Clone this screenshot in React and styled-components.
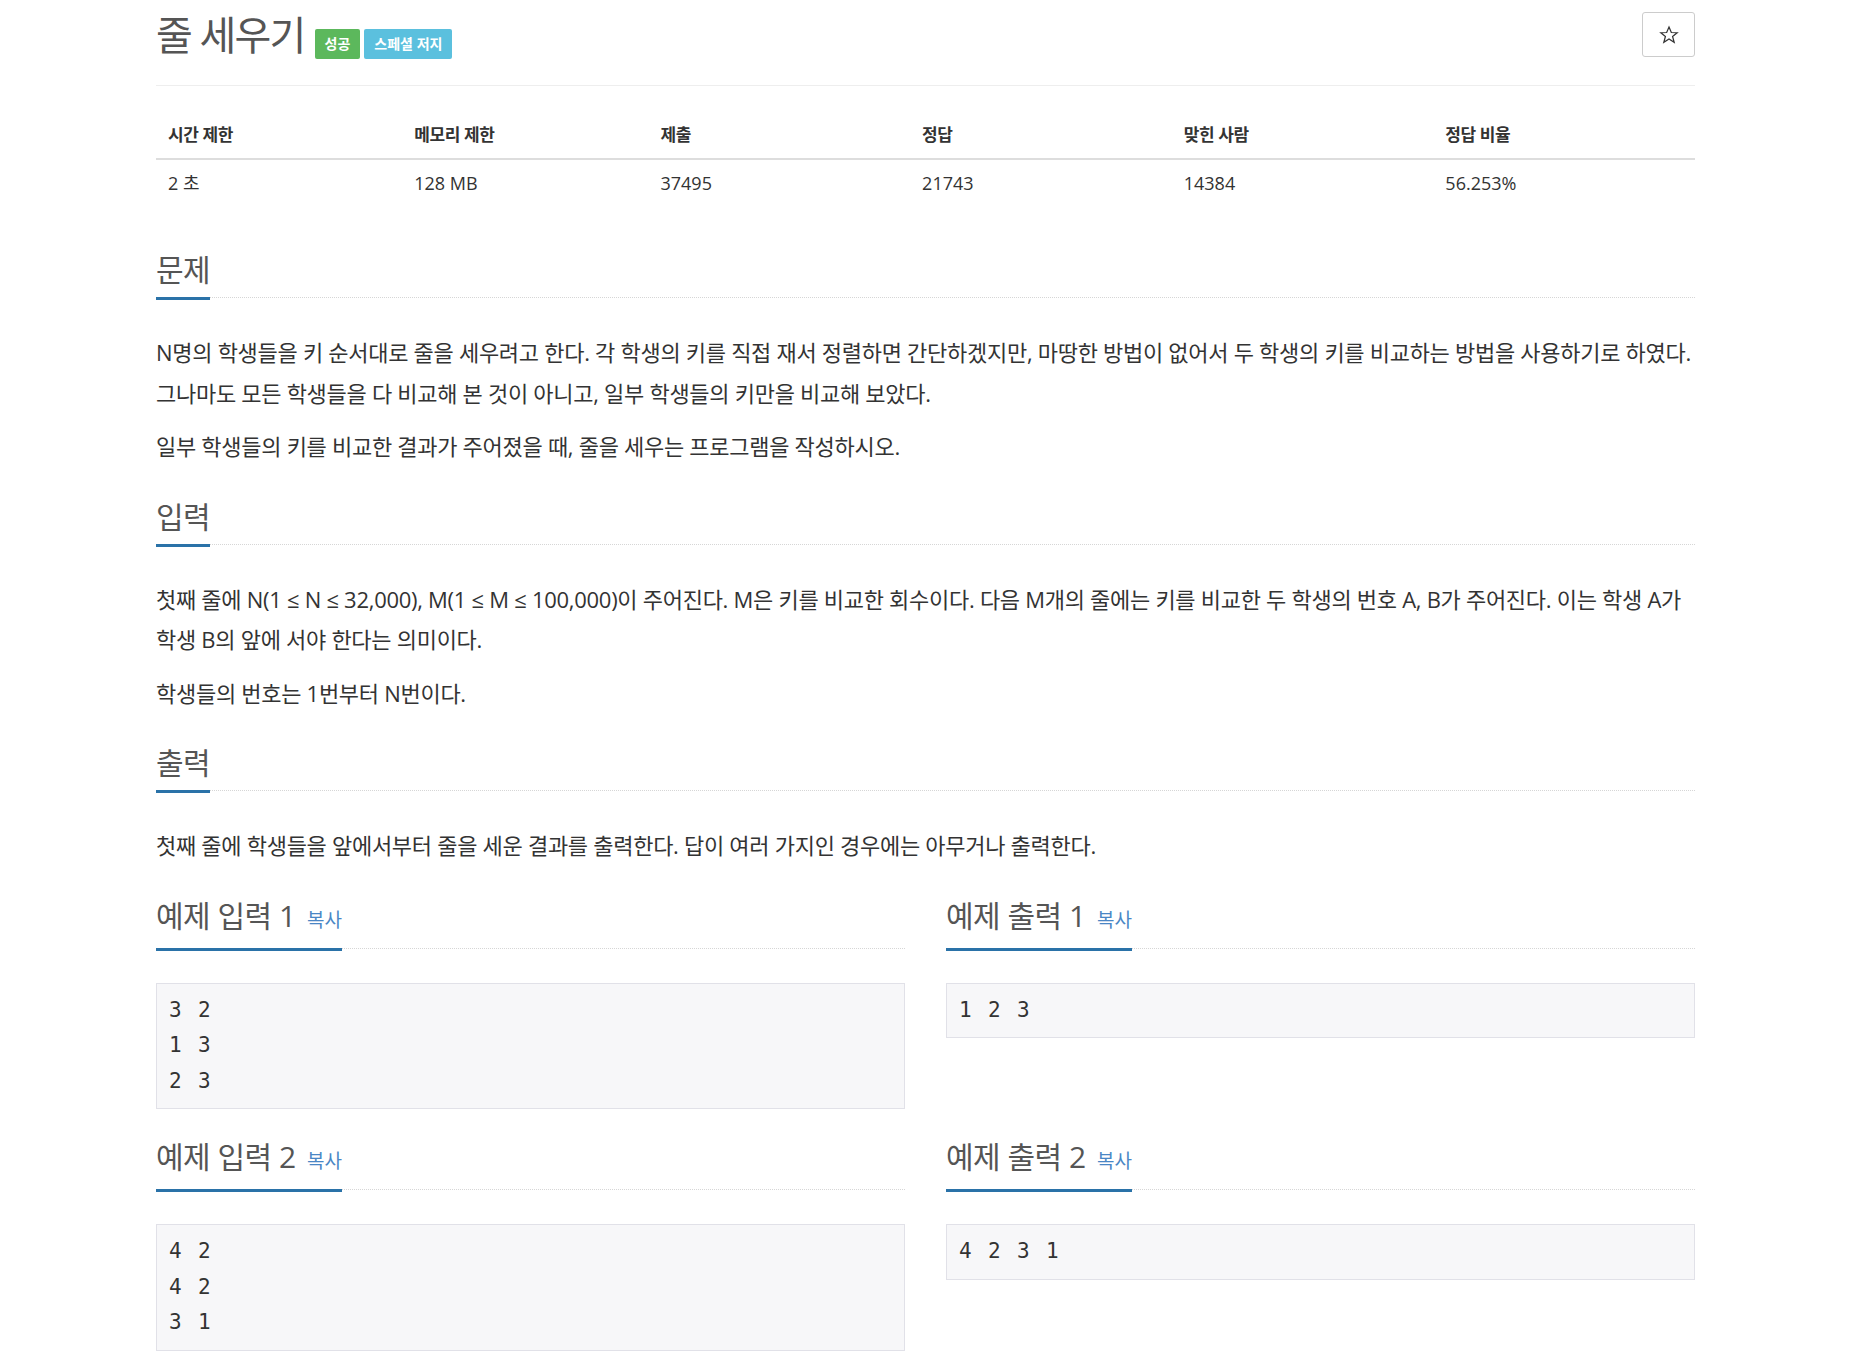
import React from 'react';
import styled, { createGlobalStyle } from 'styled-components';

const GlobalStyle = createGlobalStyle`
  body {
    margin: 0;
    background: #fff;
    color: #333;
    font-family: "Open Sans", "Noto Sans CJK KR", sans-serif;
  }
`;

const stats = [
  { label: '시간 제한', value: '2 초', width: '16%' },
  { label: '메모리 제한', value: '128 MB', width: '16%' },
  { label: '제출', value: '37495', width: '17%' },
  { label: '정답', value: '21743', width: '17%' },
  { label: '맞힌 사람', value: '14384', width: '17%' },
  { label: '정답 비율', value: '56.253%', width: '17%' },
];

const samples = [
  [
    { title: '예제 입력 1', text: '3 2\n1 3\n2 3' },
    { title: '예제 출력 1', text: '1 2 3' },
  ],
  [
    { title: '예제 입력 2', text: '4 2\n4 2\n3 1' },
    { title: '예제 출력 2', text: '4 2 3 1' },
  ],
];

const Section = ({ title, children }) => (
  <SectionBox>
    <Headline>
      <HeadTitle>{title}</HeadTitle>
    </Headline>
    {children}
  </SectionBox>
);

const App = () => {
  return (
    <>
      <GlobalStyle />
      <Page>
        <Header>
          <Title>
            <TitleText>줄 세우기</TitleText>
            <Badge color="#5cb85c">성공</Badge>
            <Badge color="#5bc0de">스페셜 저지</Badge>
          </Title>
          <StarButton type="button">
            <svg width="20" height="20" viewBox="0 0 24 24" fill="none" stroke="#333" strokeWidth="1.5" strokeLinejoin="miter">
              <polygon points="12,2.5 14.8,9 21.8,9.3 16.3,13.8 18.2,20.8 12,16.8 5.8,20.8 7.7,13.8 2.2,9.3 9.2,9" />
            </svg>
          </StarButton>
        </Header>

        <StatsTable>
          <thead>
            <tr>
              {stats.map((s) => (
                <Th key={s.label} style={{ width: s.width }}>{s.label}</Th>
              ))}
            </tr>
          </thead>
          <tbody>
            <tr>
              {stats.map((s) => (
                <Td key={s.label}>{s.value}</Td>
              ))}
            </tr>
          </tbody>
        </StatsTable>

        <Section title="문제">
          <Text>
            N명의 학생들을 키 순서대로 줄을 세우려고 한다. 각 학생의 키를 직접 재서 정렬하면 간단하겠지만, 마땅한 방법이 없어서 두 학생의 키를 비교하는 방법을 사용하기로 하였다. 그나마도 모든 학생들을 다 비교해 본 것이 아니고, 일부 학생들의 키만을 비교해 보았다.
          </Text>
          <Text>일부 학생들의 키를 비교한 결과가 주어졌을 때, 줄을 세우는 프로그램을 작성하시오.</Text>
        </Section>

        <Section title="입력">
          <Text>
            첫째 줄에 N(1 ≤ N ≤ 32,000), M(1 ≤ M ≤ 100,000)이 주어진다. M은 키를 비교한 회수이다. 다음 M개의 줄에는 키를 비교한 두 학생의 번호 A, B가 주어진다. 이는 학생 A가 학생 B의 앞에 서야 한다는 의미이다.
          </Text>
          <Text>학생들의 번호는 1번부터 N번이다.</Text>
        </Section>

        <Section title="출력">
          <Text>첫째 줄에 학생들을 앞에서부터 줄을 세운 결과를 출력한다. 답이 여러 가지인 경우에는 아무거나 출력한다.</Text>
        </Section>

        {samples.map((row, i) => (
          <SampleRow key={i}>
            {row.map((s) => (
              <SampleBox key={s.title}>
                <Headline>
                  <HeadTitle>
                    {s.title} <CopyLink>복사</CopyLink>
                  </HeadTitle>
                </Headline>
                <SamplePre>{s.text}</SamplePre>
              </SampleBox>
            ))}
          </SampleRow>
        ))}
      </Page>
    </>
  );
};

export default App;

const Page = styled.div`
  width: 1539px;
  margin: 0 auto;
`;

const Header = styled.div`
  display: flex;
  justify-content: space-between;
  align-items: flex-start;
  padding: 12px 0 27px;
  border-bottom: 1px solid #eee;
`;

const Title = styled.h1`
  display: flex;
  align-items: flex-end;
  gap: 4px;
  margin: 0;
  font-weight: 400;
`;

const TitleText = styled.span`
  font-size: 40px;
  line-height: 46px;
  letter-spacing: -1.8px;
  color: #555;
  margin-right: 6px;
`;

const Badge = styled.span`
  display: inline-block;
  height: 30px;
  line-height: 30px;
  padding: 0 10px;
  margin-bottom: -1px;
  font-size: 14px;
  font-weight: 700;
  color: #fff;
  background: ${(p) => p.color};
  border-radius: 2px;
`;

const StarButton = styled.button`
  display: flex;
  align-items: center;
  justify-content: center;
  width: 53px;
  height: 45px;
  padding: 0;
  background: #fff;
  border: 1px solid #ccc;
  border-radius: 3px;
`;

const StatsTable = styled.table`
  width: 100%;
  margin: 26px 0 46px;
  border-collapse: collapse;
`;

const Th = styled.th`
  text-align: left;
  padding: 9px 12px 10px;
  font-size: 17px;
  font-weight: 700;
  line-height: 27px;
  letter-spacing: -0.4px;
  color: #333;
  border-bottom: 2px solid #ddd;
`;

const Td = styled.td`
  padding: 10px 12px;
  font-size: 18px;
  line-height: 27px;
  color: #333;
`;

const SectionBox = styled.section`
  margin-bottom: 33px;
`;

const SampleBox = styled.section`
  margin-bottom: 31px;
`;

const Headline = styled.div`
  display: flex;
  margin-bottom: 34px;
  border-bottom: 1px dotted #d6d6d6;
`;

const HeadTitle = styled.h2`
  margin: 0 0 -3px;
  padding-bottom: 11px;
  font-size: 30px;
  font-weight: 400;
  line-height: 33px;
  letter-spacing: -0.5px;
  color: #555;
  border-bottom: 3px solid #2a72a8;
`;

const CopyLink = styled.span`
  margin-left: 4px;
  font-size: 19px;
  letter-spacing: 0;
  color: #4a86c5;
`;

const Text = styled.p`
  margin: 0 0 13px;
  font-size: 22px;
  line-height: 40.5px;
  letter-spacing: -0.28px;
  color: #333;
`;

const SampleRow = styled.div`
  display: grid;
  grid-template-columns: 1fr 1fr;
  column-gap: 41px;
`;

const SamplePre = styled.pre`
  margin: 0;
  padding: 9px 12px;
  font-family: "DejaVu Sans Mono", monospace;
  font-size: 21px;
  line-height: 35.5px;
  letter-spacing: 1.85px;
  color: #333;
  background: #f7f7f9;
  border: 1px solid #e1e1e8;
  white-space: pre;
`;
